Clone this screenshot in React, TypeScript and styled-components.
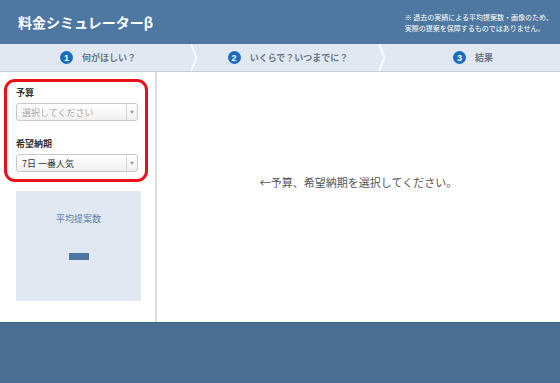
import React from 'react';
import styled, { createGlobalStyle } from 'styled-components';

const GlobalStyle = createGlobalStyle`
  html, body {
    margin: 0;
    padding: 0;
    height: 100%;
  }
  body {
    font-family: "Noto Sans CJK JP", "Noto Sans", sans-serif;
    background: #fff;
  }
  #root {
    height: 100%;
  }
`;

const Page = styled.div`
  display: flex;
  flex-direction: column;
  height: 100%;
`;

const Header = styled.header`
  display: flex;
  justify-content: space-between;
  align-items: center;
  height: 44px;
  padding: 0 7px 0 18px;
  background-color: #4e78a1;
  box-sizing: border-box;
`;

const Title = styled.h1`
  margin: 0;
  color: #fff;
  font-size: 14px;
  font-weight: 700;
`;

const Note = styled.p`
  margin: 0;
  color: #fff;
  font-size: 7px;
  line-height: 11px;
  padding-top: 2px;
`;

const StepBar = styled.nav`
  display: grid;
  grid-template-columns: 190px 8px 180px 8px 1fr;
  height: 27px;
  background-color: #e1e8f1;
  border-bottom: 1px solid #c9ced4;
`;

const Step = styled.div<{ $shift?: number }>`
  display: flex;
  justify-content: center;
  align-items: center;
  gap: 9px;
  padding-left: ${(p) => p.$shift || 0}px;
`;

const StepNum = styled.span`
  display: flex;
  flex-shrink: 0;
  justify-content: center;
  align-items: center;
  width: 13px;
  height: 13px;
  border-radius: 50%;
  background-color: #1a6cc0;
  color: #fff;
  font-family: "Liberation Sans", sans-serif;
  font-size: 9px;
  font-weight: 700;
`;

const StepLabel = styled.span`
  color: #6a7786;
  font-size: 9px;
  font-weight: 700;
`;

const Chevron = () => (
  <svg width="8" height="27" viewBox="0 0 8 27">
    <polyline points="1,0 6.5,13.5 1,27" fill="none" stroke="#fff" strokeWidth="1.6" />
  </svg>
);

const Body = styled.main`
  display: flex;
  height: 250px;
`;

const Sidebar = styled.aside`
  width: 155px;
  border-right: 2px solid #dedede;
  padding-top: 7px;
`;

const FormBox = styled.div`
  box-sizing: border-box;
  width: 144px;
  margin-left: 4px;
  padding: 4px 7px 7px 9px;
  border: 3px solid #e8101a;
  border-radius: 11px;
`;

const FieldLabel = styled.div<{ $top?: number }>`
  color: #333;
  font-size: 9px;
  font-weight: 700;
  line-height: 14px;
  margin-top: ${(p) => p.$top || 0}px;
`;

const Select = styled.div`
  display: flex;
  align-items: center;
  box-sizing: border-box;
  height: 18px;
  margin-top: 3px;
  border: 1px solid #c8c8c8;
  border-radius: 3px;
  background: linear-gradient(#ffffff, #f0f0f0);
  overflow: hidden;
`;

const SelectText = styled.span<{ $placeholder?: boolean }>`
  flex: 1;
  padding-left: 5px;
  font-size: 9px;
  color: ${(p) => (p.$placeholder ? '#aaa' : '#333')};
`;

const SelectArrow = styled.span`
  display: flex;
  justify-content: center;
  align-items: center;
  width: 10px;
  height: 100%;
  border-left: 1px solid #d6d6d6;
  color: #999;
  font-size: 4px;
`;

const StatBox = styled.div`
  display: flex;
  flex-direction: column;
  align-items: center;
  box-sizing: border-box;
  width: 125px;
  height: 110px;
  margin: 9px 0 0 16px;
  padding-top: 21px;
  background-color: #e1e8f1;
`;

const StatTitle = styled.div`
  color: #5b7fa6;
  font-size: 9px;
  line-height: 14px;
`;

const StatDash = styled.div`
  width: 20px;
  height: 7px;
  margin-top: 27px;
  background-color: #4d76a0;
`;

const Content = styled.section`
  flex: 1;
  display: flex;
  justify-content: center;
  padding-top: 103px;
`;

const Message = styled.p`
  margin: 0;
  color: #555;
  font-size: 11px;
  line-height: 14px;
`;

const Footer = styled.footer`
  flex: 1;
  background-color: #4a6f93;
  border-top: 1px solid #3f6082;
`;

const App: React.FC = () => {
  return (
    <Page>
      <GlobalStyle />
      <Header>
        <Title>料金シミュレーターβ</Title>
        <Note>
          ※ 過去の実績による平均提案数・画像のため、
          <br />
          実際の提案を保障するものではありません。
        </Note>
      </Header>
      <StepBar>
        <Step $shift={6}>
          <StepNum>1</StepNum>
          <StepLabel>何がほしい？</StepLabel>
        </Step>
        <Chevron />
        <Step>
          <StepNum>2</StepNum>
          <StepLabel>いくらで？いつまでに？</StepLabel>
        </Step>
        <Chevron />
        <Step>
          <StepNum>3</StepNum>
          <StepLabel>結果</StepLabel>
        </Step>
      </StepBar>
      <Body>
        <Sidebar>
          <FormBox>
            <FieldLabel>予算</FieldLabel>
            <Select>
              <SelectText $placeholder>選択してください</SelectText>
              <SelectArrow>▼</SelectArrow>
            </Select>
            <FieldLabel $top={16}>希望納期</FieldLabel>
            <Select>
              <SelectText>7日 一番人気</SelectText>
              <SelectArrow>▼</SelectArrow>
            </Select>
          </FormBox>
          <StatBox>
            <StatTitle>平均提案数</StatTitle>
            <StatDash />
          </StatBox>
        </Sidebar>
        <Content>
          <Message>←予算、希望納期を選択してください。</Message>
        </Content>
      </Body>
      <Footer />
    </Page>
  );
};

export default App;
